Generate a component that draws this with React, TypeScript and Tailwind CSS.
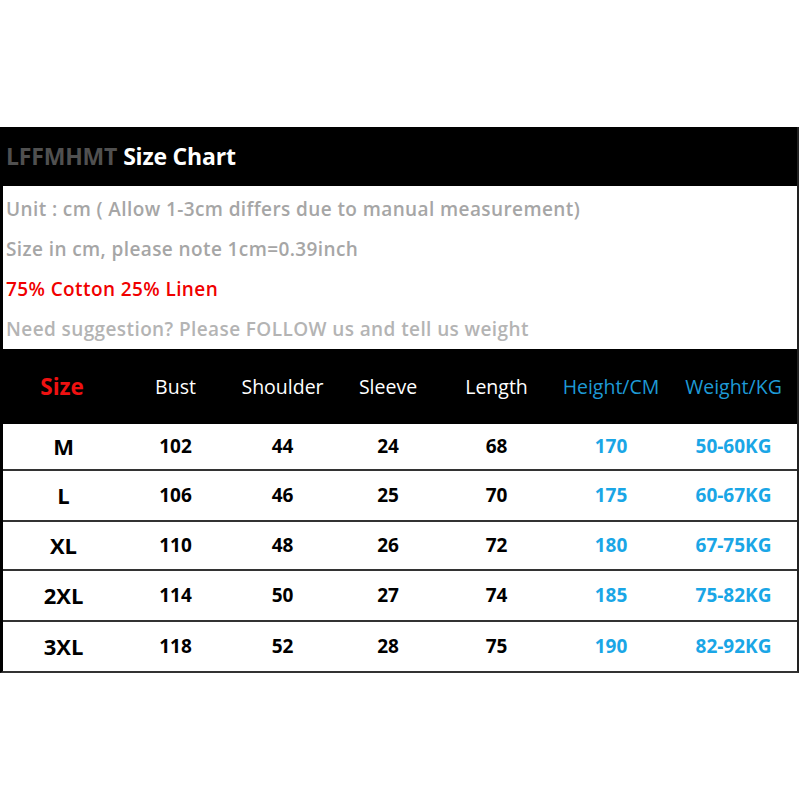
import React from "react";

const rows = [
  ["M", "102", "44", "24", "68", "170", "50-60KG"],
  ["L", "106", "46", "25", "70", "175", "60-67KG"],
  ["XL", "110", "48", "26", "72", "180", "67-75KG"],
  ["2XL", "114", "50", "27", "74", "185", "75-82KG"],
  ["3XL", "118", "52", "28", "75", "190", "82-92KG"],
];

const rowHeights = ["h-[45px]", "h-[51px]", "h-[49px]", "h-[51px]", "h-[51px]"];

const grid = "grid grid-cols-[118px_109px_105px_106px_111px_118px_1fr]";

export default function App() {
  return (
    <div className="w-[800px] h-[800px] bg-white pt-[127px]" style={{ fontFamily: '"Open Sans", "Noto Sans", sans-serif' }}>
      <div className="border-l-[3px] border-r-2 border-b-2 border-black border-r-[#222] border-b-[#333] w-[799px]">
        <div className="bg-black h-[59px] flex items-center pl-[3px] text-[23px] font-bold tracking-[-0.2px]">
          <span className="text-[#505050]">LFFMHMT</span>
          <span className="text-white ml-[6px]">Size Chart</span>
        </div>
        <div className="pt-[3px] pb-0 pl-[3px] text-[19px] font-semibold leading-[40px] text-[#a6a6a6] tracking-[0.4px]">
          <div>Unit : cm ( Allow 1-3cm differs due to manual measurement)</div>
          <div>Size in cm, please note 1cm=0.39inch</div>
          <div className="text-[#f00000]">75% Cotton 25% Linen</div>
          <div className="text-[#b4b4b4]">Need suggestion? Please FOLLOW us and tell us weight</div>
        </div>
        <div className={`${grid} bg-black h-[75px] items-center text-center text-[19.5px] text-white`}>
          <div className="text-[#ee1111] font-bold text-[22.5px]">Size</div>
          <div>Bust</div>
          <div>Shoulder</div>
          <div>Sleeve</div>
          <div>Length</div>
          <div className="text-[#1e9ad6]">Height/CM</div>
          <div className="text-[#1e9ad6]">Weight/KG</div>
        </div>
        {rows.map((r, i) => (
          <div key={r[0]} className={`${grid} ${rowHeights[i]} items-center text-center font-bold text-[19px] text-black ${i > 0 ? "border-t-2 border-[#333]" : ""}`}>
            <div className="text-[22px] pl-[3px]">{r[0]}</div>
            <div>{r[1]}</div>
            <div>{r[2]}</div>
            <div>{r[3]}</div>
            <div>{r[4]}</div>
            <div className="text-[#1aa6e6]">{r[5]}</div>
            <div className="text-[#1aa6e6]">{r[6]}</div>
          </div>
        ))}
      </div>
    </div>
  );
}
